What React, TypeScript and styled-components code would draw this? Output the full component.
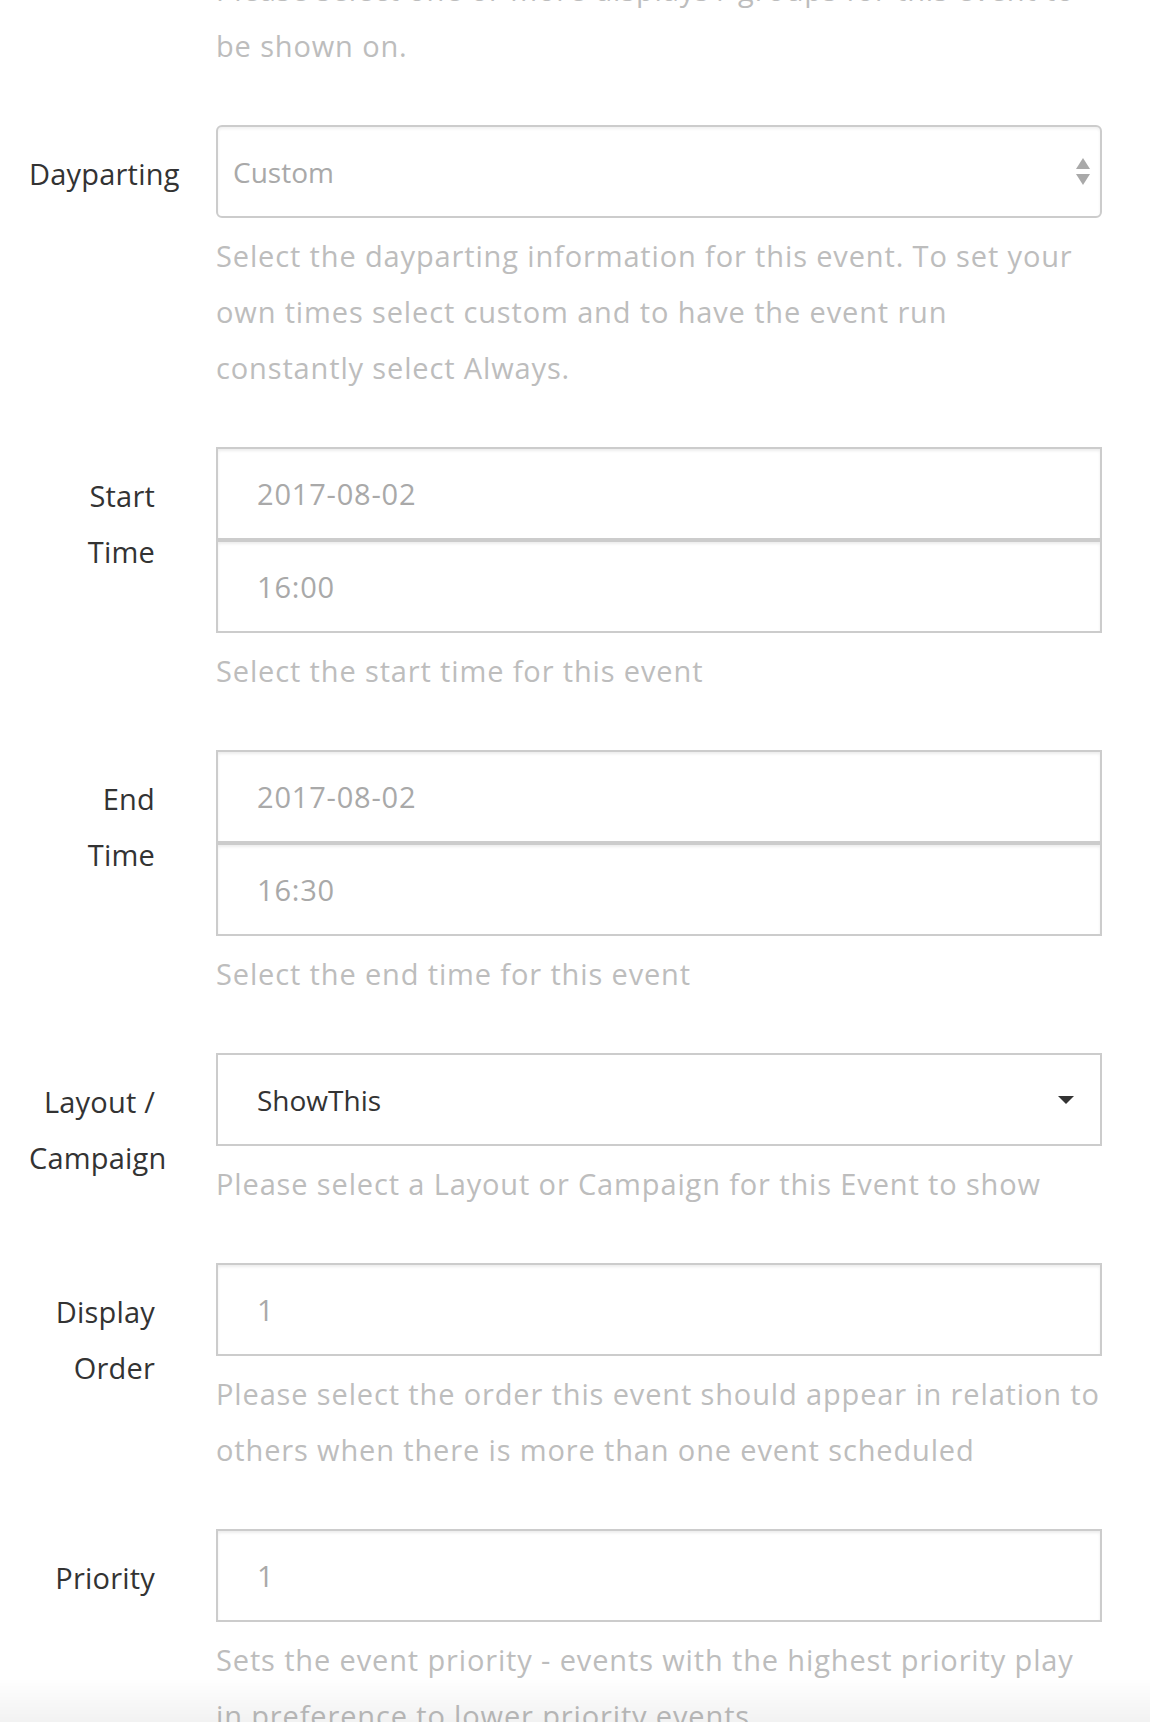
import React from "react";
import styled, { createGlobalStyle } from "styled-components";

const GlobalStyle = createGlobalStyle`
  html, body {
    margin: 0;
    padding: 0;
    background: #ffffff;
    font-family: "Open Sans", "Liberation Sans", sans-serif;
  }
  * { box-sizing: border-box; }
`;

const Page = styled.div`
  padding: 0 48px 0 25px;
  margin-top: -38px;
  overflow: hidden;
`;

const FormGroup = styled.div`
  display: grid;
  grid-template-columns: 130px 1fr;
  column-gap: 61px;
  margin-bottom: 51px;
`;

const Label = styled.label`
  display: block;
  text-align: right;
  padding: 21px 0 0 4px;
  font-size: 29px;
  line-height: 56px;
  color: #333333;
  letter-spacing: 0.2px;
`;

const Controls = styled.div`
  display: flex;
  flex-direction: column;
  min-width: 0;
`;

const Help = styled.p<{ $first?: boolean }>`
  margin: ${(p) => (p.$first ? "0" : "10px 0 0")};
  font-size: 29px;
  line-height: 56px;
  color: #bdbdbd;
  letter-spacing: 0.86px;
`;

const Input = styled.input`
  display: block;
  width: 100%;
  height: 93px;
  margin: 0;
  padding: 0 0 0 39px;
  border: 2px solid #cccccc;
  border-radius: 0;
  box-shadow: inset 0 2px 3px rgba(0, 0, 0, 0.075);
  background: #ffffff;
  font-family: inherit;
  font-size: 29px;
  letter-spacing: 0.8px;
  color: #a9a9a9;
  outline: none;
`;

const SelectBox = styled.div<{ $rounded?: boolean; $padLeft: number; $dark?: boolean }>`
  display: flex;
  align-items: center;
  justify-content: space-between;
  height: 93px;
  padding: 0 ${(p) => (p.$rounded ? "10px" : "26px")} 0 ${(p) => p.$padLeft}px;
  border: 2px solid #cccccc;
  border-radius: ${(p) => (p.$rounded ? "6px" : "0")};
  box-shadow: ${(p) => (p.$rounded ? "inset 0 2px 3px rgba(0,0,0,0.06)" : "none")};
  background: #ffffff;
  font-size: 28px;
  color: ${(p) => (p.$dark ? "#333333" : "#a9a9a9")};
`;

const SpinArrows = () => (
  <svg width="14" height="28" viewBox="0 0 14 28" aria-hidden="true">
    <polygon points="7,0 14,11 0,11" fill="#a9a9a9" />
    <polygon points="0,16 14,16 7,27" fill="#a9a9a9" />
  </svg>
);

const Caret = () => (
  <svg width="16" height="8" viewBox="0 0 16 8" aria-hidden="true">
    <polygon points="0,0 16,0 8,8" fill="#333333" />
  </svg>
);

const BottomFade = styled.div`
  position: fixed;
  left: 0;
  right: 0;
  bottom: 0;
  height: 44px;
  pointer-events: none;
  background: linear-gradient(to bottom, rgba(0, 0, 0, 0), rgba(0, 0, 0, 0.05));
`;

export default function App() {
  return (
    <>
      <GlobalStyle />
      <Page>
        <FormGroup>
          <div />
          <Controls>
            <Help $first>
              Please select one or more displays / groups for this event to be shown on.
            </Help>
          </Controls>
        </FormGroup>

        <FormGroup>
          <Label>Dayparting</Label>
          <Controls>
            <SelectBox $rounded $padLeft={15}>
              <span>Custom</span>
              <SpinArrows />
            </SelectBox>
            <Help>
              Select the dayparting information for this event. To set your own times select
              custom and to have the event run constantly select Always.
            </Help>
          </Controls>
        </FormGroup>

        <FormGroup>
          <Label>Start Time</Label>
          <Controls>
            <Input readOnly defaultValue="2017-08-02" />
            <Input readOnly defaultValue="16:00" />
            <Help>Select the start time for this event</Help>
          </Controls>
        </FormGroup>

        <FormGroup>
          <Label>End Time</Label>
          <Controls>
            <Input readOnly defaultValue="2017-08-02" />
            <Input readOnly defaultValue="16:30" />
            <Help>Select the end time for this event</Help>
          </Controls>
        </FormGroup>

        <FormGroup>
          <Label>Layout / Campaign</Label>
          <Controls>
            <SelectBox $padLeft={39} $dark>
              <span>ShowThis</span>
              <Caret />
            </SelectBox>
            <Help>Please select a Layout or Campaign for this Event to show</Help>
          </Controls>
        </FormGroup>

        <FormGroup>
          <Label>Display Order</Label>
          <Controls>
            <Input readOnly defaultValue="1" />
            <Help>
              Please select the order this event should appear in relation to others when there
              is more than one event scheduled
            </Help>
          </Controls>
        </FormGroup>

        <FormGroup>
          <Label>Priority</Label>
          <Controls>
            <Input readOnly defaultValue="1" />
            <Help>
              Sets the event priority - events with the highest priority play in preference to
              lower priority events
            </Help>
          </Controls>
        </FormGroup>
      </Page>
      <BottomFade />
    </>
  );
}
